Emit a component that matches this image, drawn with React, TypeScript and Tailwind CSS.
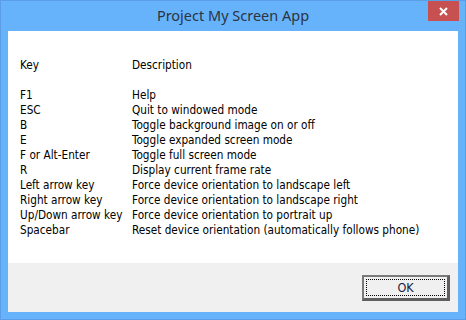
import React from 'react';

const shortcuts: [string, string][] = [
  ['F1', 'Help'],
  ['ESC', 'Quit to windowed mode'],
  ['B', 'Toggle background image on or off'],
  ['E', 'Toggle expanded screen mode'],
  ['F or Alt-Enter', 'Toggle full screen mode'],
  ['R', 'Display current frame rate'],
  ['Left arrow key', 'Force device orientation to landscape left'],
  ['Right arrow key', 'Force device orientation to landscape right'],
  ['Up/Down arrow key', 'Force device orientation to portrait up'],
  ['Spacebar', 'Reset device orientation (automatically follows phone)'],
];

function CloseButton() {
  return (
    <button
      type="button"
      className="absolute top-0 right-[6px] w-[31px] h-[20px] bg-[#c75050] flex items-center justify-center"
    >
      <svg width="9" height="9" viewBox="0 0 9 9">
        <path d="M1 1 L8 8 M8 1 L1 8" stroke="#fff" strokeWidth="2" />
      </svg>
    </button>
  );
}

function App() {
  return (
    <div className="w-[466px] h-[320px] bg-[#66b3fb] border border-[#5a9ee6] flex flex-col">
      <div className="relative h-[30px] flex items-center justify-center">
        <h1 className="text-[14.5px] text-[#2c3440] font-['Noto_Sans',sans-serif] leading-none pb-[2px]">
          Project My Screen App
        </h1>
        <CloseButton />
      </div>

      <div className="mx-[7px] mb-[7px] flex-1 flex flex-col font-['DejaVu_Sans_Condensed',sans-serif] text-[11.7px] leading-[15px] text-black">
        <div className="bg-white h-[232px] pl-[12px] pt-[27px]">
          <div className="flex">
            <span className="w-[112px]">Key</span>
            <span>Description</span>
          </div>
          <div className="h-[15px]" />
          {shortcuts.map(([key, desc]) => (
            <div key={key} className="flex">
              <span className="w-[112px]">{key}</span>
              <span>{desc}</span>
            </div>
          ))}
        </div>

        <div className="flex-1 bg-[#f0f0f0] flex justify-end items-start pt-[12px] pr-[8px]">
          <button
            type="button"
            className="w-[88px] h-[26px] bg-[#f0f0f0] border-t-2 border-l-2 border-r-[3px] border-b-[3px] border-t-[#7a7a7a] border-l-[#7a7a7a] border-r-[#5f5f5f] border-b-[#5f5f5f] p-[2px]"
          >
            <div className="h-full border border-dotted border-black flex items-center justify-center text-[12.5px] text-[#1a1a40]">
              OK
            </div>
          </button>
        </div>
      </div>
    </div>
  );
}

export default App;
